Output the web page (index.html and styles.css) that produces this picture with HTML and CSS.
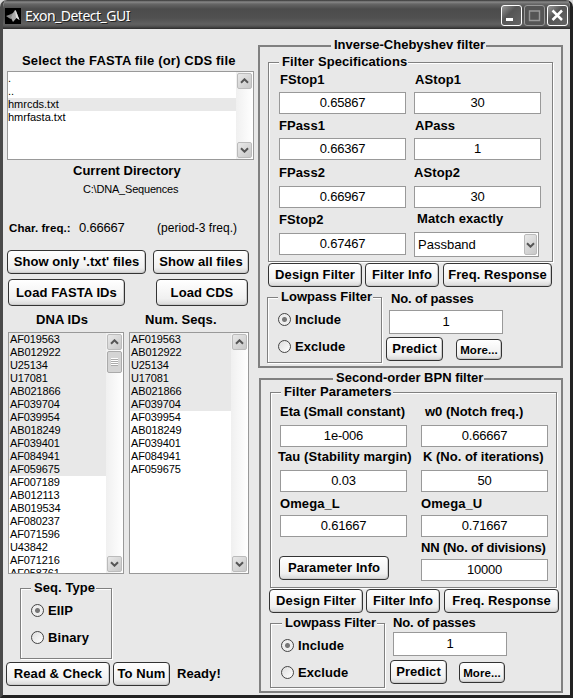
FILE: index.html
```html
<!DOCTYPE html>
<html lang="en">
<head>
<meta charset="utf-8">
<title>Exon_Detect_GUI</title>
<link rel="stylesheet" href="styles.css">
</head>
<body>
<svg width="0" height="0" class="defs">
  <symbol id="up" viewBox="0 0 9 6"><path d="M1 4.8 4.5 1.3 8 4.8" fill="none" stroke="#555" stroke-width="2"/></symbol>
  <symbol id="down" viewBox="0 0 9 6"><path d="M1 1.2 4.5 4.7 8 1.2" fill="none" stroke="#555" stroke-width="2"/></symbol>
</svg>
<div class="window">
  <header class="titlebar">
    <svg class="logo" viewBox="0 0 16 16"><rect width="16" height="16" fill="#000"/><path d="M1 8 5 6.500 8 5 8 9 5.500 11z" fill="#888"/><path d="M6 10 8 5 10 2 11 3 14.500 12 11.500 10 8 14z" fill="#aaa"/><path d="M10 2 11 3 14.500 12 11 9.500z" fill="#ddd"/></svg>
    <span class="caption">Exon_Detect_GUI</span>
    <span class="winbtn"><svg viewBox="0 0 21 21"><rect x="5" y="13" width="7" height="3" fill="#fff"/></svg></span>
    <span class="winbtn dim"><svg viewBox="0 0 21 21"><path d="M5.500 6H15.500V15.500H5.500z M5 6H16" fill="none" stroke="#999" stroke-width="1.400"/></svg></span>
    <span class="winbtn"><svg viewBox="0 0 21 21"><path d="M5.500 5.500 15 15M15 5.500 5.500 15" stroke="#fff" stroke-width="2.500"/></svg></span>
  </header>
  <main class="content">
    <section class="left">
      <h2 class="file-title">Select the FASTA file (or) CDS file</h2>
      <div class="listbox files">
        <ul><li>.</li><li>..</li><li class="sel">hmrcds.txt</li><li>hmrfasta.txt</li></ul>
        <div class="scroll"><b class="arrow"><svg><use href="#up"/></svg></b><b class="arrow end"><svg><use href="#down"/></svg></b></div>
      </div>
      <h2 class="dir-title">Current Directory</h2>
      <p class="dir">C:\DNA_Sequences</p>
      <div class="freq"><b>Char. freq.:</b><span class="num">0.66667</span><span class="note">(period-3 freq.)</span></div>
      <div class="btns show"><button>Show only '.txt' files</button><button>Show all files</button></div>
      <div class="btns load"><button>Load FASTA IDs</button><button>Load CDS</button></div>
      <div class="list-heads"><h2>DNA IDs</h2><h2>Num. Seqs.</h2></div>
      <div class="lists">
        <div class="listbox">
          <ul><li class="sel">AF019563</li><li class="sel">AB012922</li><li class="sel">U25134</li><li class="sel">U17081</li><li class="sel">AB021866</li><li class="sel">AF039704</li><li class="sel">AF039954</li><li class="sel">AB018249</li><li class="sel">AF039401</li><li class="sel">AF084941</li><li class="sel">AF059675</li><li>AF007189</li><li>AB012113</li><li>AB019534</li><li>AF080237</li><li>AF071596</li><li>U43842</li><li>AF071216</li><li>AF058761</li></ul>
          <div class="scroll"><b class="arrow"><svg><use href="#up"/></svg></b><b class="thumb"></b><b class="arrow end"><svg><use href="#down"/></svg></b></div>
        </div>
        <div class="listbox">
          <ul><li class="sel">AF019563</li><li class="sel">AB012922</li><li class="sel">U25134</li><li class="sel">U17081</li><li class="sel">AB021866</li><li class="sel">AF039704</li><li>AF039954</li><li>AB018249</li><li>AF039401</li><li>AF084941</li><li>AF059675</li></ul>
          <div class="scroll"><b class="arrow"><svg><use href="#up"/></svg></b><b class="arrow end"><svg><use href="#down"/></svg></b></div>
        </div>
      </div>
      <div class="group seq-type">
        <h3>Seq. Type</h3>
        <label class="radio on"><i></i>EIIP</label>
        <label class="radio"><i></i>Binary</label>
      </div>
      <div class="btns bottom"><button>Read &amp; Check</button><button>To Num</button><span>Ready!</span></div>
    </section>

    <section class="right">
      <div class="panel cheb">
        <h2 class="panel-title">Inverse-Chebyshev filter</h2>
        <div class="group specs">
          <h3>Filter Specifications</h3>
          <div class="fields">
            <label class="first">FStop1</label><label class="first">AStop1</label>
            <div class="input">0.65867</div><div class="input">30</div>
            <label>FPass1</label><label class="in">APass</label>
            <div class="input">0.66367</div><div class="input">1</div>
            <label class="mid">FPass2</label><label class="mid">AStop2</label>
            <div class="input">0.66967</div><div class="input">30</div>
            <label>FStop2</label><label class="match">Match exactly</label>
            <div class="input last">0.67467</div><div class="select">Passband<b class="arrow"><svg><use href="#down"/></svg></b></div>
          </div>
        </div>
        <div class="btns actions"><button>Design Filter</button><button>Filter Info</button><button>Freq. Response</button></div>
        <div class="lower">
          <div class="group lowpass"><h3>Lowpass Filter</h3><label class="radio on"><i></i>Include</label><label class="radio"><i></i>Exclude</label></div>
          <div class="passes"><h3>No. of passes</h3><div class="input">1</div><div class="btns"><button>Predict</button><button class="more">More...</button></div></div>
        </div>
      </div>
      <div class="panel bpn">
        <h2 class="panel-title">Second-order BPN filter</h2>
        <div class="group params">
          <h3>Filter Parameters</h3>
          <div class="fields">
            <label class="eta">Eta (Small constant)</label><label class="w0">w0 (Notch freq.)</label>
            <div class="input">1e-006</div><div class="input">0.66667</div>
            <label class="tau">Tau (Stability margin)</label><label class="k">K (No. of iterations)</label>
            <div class="input">0.03</div><div class="input">50</div>
            <label>Omega_L</label><label class="omega-u">Omega_U</label>
            <div class="input">0.61667</div><div class="input">0.71667</div>
            <button class="info">Parameter Info</button><label class="nn">NN (No. of divisions)</label>
            <div class="input">10000</div>
          </div>
        </div>
        <div class="btns actions"><button>Design Filter</button><button>Filter Info</button><button>Freq. Response</button></div>
        <div class="lower">
          <div class="group lowpass"><h3>Lowpass Filter</h3><label class="radio on"><i></i>Include</label><label class="radio"><i></i>Exclude</label></div>
          <div class="passes"><h3>No. of passes</h3><div class="input">1</div><div class="btns"><button>Predict</button><button class="more">More...</button></div></div>
        </div>
      </div>
    </section>
  </main>
</div>
</body>
</html>
```
FILE: styles.css
```css
* { box-sizing: border-box; margin: 0; padding: 0; }
body { width: 573px; height: 698px; overflow: hidden; background: #d8d8d8; font: bold 13px/16px "Liberation Sans", Arial, sans-serif; letter-spacing: .08px; color: #000; white-space: nowrap; }
.defs { position: absolute; }
h2, h3 { font-size: 13px; line-height: 16px; }
ul { list-style: none; }
.window { width: 573px; height: 698px; border: solid #222; border-width: 0 3px 3px; border-left-color: #4a4a4a; border-radius: 7px 7px 0 0; overflow: hidden; background: #e8e8e8; }

.titlebar { display: flex; align-items: center; height: 29px; margin: 0 -3px; padding: 2px 5px 0; background: linear-gradient(#333 0, #888 2px, #666 4px, #4c4c4c 9px, #505050 18px, #606060 24px, #555 26px, #2c2c2c 29px); }
.logo { width: 16px; height: 16px; }
.caption { flex: 1; margin-left: 4px; color: #fff; font: 14px/18px "Noto Sans", sans-serif; letter-spacing: -.5px; text-shadow: 1px 1px #222; }
.winbtn { width: 21px; height: 21px; margin-left: 2px; border: 1px solid #fff; border-radius: 3px; background: linear-gradient(135deg, #999, #555 40%, #666); }
.winbtn svg { display: block; width: 21px; height: 21px; margin: -1px; }
.winbtn.dim { border-color: #999; background: #555; }

.content { display: flex; }
.left { width: 255px; }
.file-title { margin: 24px 0 0 19px; letter-spacing: .18px; }
.listbox { display: flex; border: 1px solid #999; background: #fff; overflow: hidden; font: 11px/13px "Liberation Sans", Arial, sans-serif; letter-spacing: 0; }
.listbox ul { flex: 1; }
.listbox li { height: 13px; padding-left: 1px; letter-spacing: -.12px; }
.files li { padding-left: 0; letter-spacing: 0; }
.sel { background: #e8e8e8; }
.files { width: 247px; height: 89px; margin: 2px 0 0 4px; }
.scroll { display: flex; flex-direction: column; width: 17px; padding: 1px; background: linear-gradient(90deg, #f0f0f0, #fff); }
.arrow { display: grid; place-items: center; width: 15px; height: 16px; border: 1px solid #bbb; border-radius: 2px; background: linear-gradient(135deg, #e8e8e8, #c8c8c8); }
.arrow svg { width: 9px; height: 6px; }
.arrow.end { margin-top: auto; }
.thumb { width: 15px; height: 22px; margin-top: 1px; border: 1px solid #aaa; border-radius: 2px; background: repeating-linear-gradient(#fff 0 1px, #aaa 1px 2px) center / 7px 8px no-repeat, #d4d4d4; }
.dir-title { margin: 3px 0 0 70px; letter-spacing: 0; }
.dir { margin: 3px 0 0 80px; font: 11px/14px "Liberation Sans", Arial, sans-serif; letter-spacing: -.2px; }
.freq { display: grid; grid-template-columns: 70px 78px 1fr; align-items: baseline; height: 16px; margin: 24px 0 0 6px; font-size: 11.500px; }
.freq .num { font: 13px/16px "Liberation Sans", sans-serif; letter-spacing: -.2px; }
.freq .note { font: 12px/16px "Liberation Sans", sans-serif; letter-spacing: .05px; }
.btns { display: flex; }
button { height: 24px; border: 1px solid #333; border-radius: 4px; background: linear-gradient(#fff, #f0f0f0 75%, #d8d8d8); color: #000; font: inherit; letter-spacing: inherit; white-space: nowrap; text-align: center; box-shadow: inset -1px -1px #ccc; }
.show { gap: 7px; margin: 14px 0 0 4px; }
.show button { width: 139px; }
.show button + button { width: 96px; }
.load { justify-content: space-between; margin: 5px 10px 0 5px; }
.load button { width: 117px; height: 27px; }
.load button + button { width: 92px; }
.list-heads { display: grid; grid-template-columns: 109px 1fr; margin: 6px 0 0 33px; }
.lists { display: grid; grid-template-columns: 116px 120px; gap: 5px; height: 242px; margin: 4px 0 0 5px; }
.lists .listbox { min-height: 0; height: 242px; }
.group { border: 1px solid #808080; box-shadow: 1px 1px #fff, inset 1px 1px #fff; }
.group > h3 { width: fit-content; padding: 0 1px 0 3px; background: #e8e8e8; margin: -9px 0 0 10px; }
.seq-type { width: 92px; height: 71px; margin: 14px 0 0 17px; }
.radio { display: flex; align-items: center; height: 27px; }
h3 + .radio { margin-top: 1px; }
.radio i { width: 13px; height: 13px; margin: 0 4px 0 10px; border: 1px solid #444; border-radius: 50%; background: linear-gradient(135deg, #ddd, #fff); }
.radio.on i { background: radial-gradient(circle, #777 0 2px, #eee 3px); }
.bottom { gap: 3px; margin: 3px 0 0 3px; }
.bottom button { width: 104px; }
.bottom button + button { width: 57px; }
.bottom span { margin: 4px 0 0 4px; }

.right { width: 312px; }
.panel { border: 2px solid #808080; }
.panel-title { width: fit-content; background: #e8e8e8; padding: 0 1px 0 3px; letter-spacing: 0; }
.cheb { width: 305px; height: 323px; margin-top: 16px; }
.cheb .panel-title { margin: -10px 0 0 71px; }
.group.specs { width: 285px; height: 200px; margin: 9px 0 0 8px; }
.input, .select { height: 22px; border: 1px solid #999; background: #fff; font: 13px/20px "Liberation Sans", Arial, sans-serif; letter-spacing: -.2px; text-align: center; }
.fields { display: grid; }
.fields label { align-self: start; height: 16px; padding-top: 4px; }
.specs .fields { grid-template-columns: 127px 127px; column-gap: 8px; grid-template-rows: 21px 22px 24px 22px 26px 22px 24px 24px; margin: 1px 0 0 10px; }
.specs .first { padding: 1px 0 0 1px; }
.specs .mid { padding-top: 5px; }
.specs .in { padding-left: 1px; }
.specs .match { padding: 3px 0 0 3px; }
.specs .last { margin-top: 1px; }
.specs .input.last { height: 22px; }
.select { display: flex; justify-content: space-between; width: 125px; height: 25px; padding: 1px 1px 1px 3px; letter-spacing: 0; line-height: 21px; }
.select .arrow { width: 13px; height: 21px; }
.actions { gap: 3px; margin: 1px 0 0 8px; }
.actions button { width: 94px; }
.actions button:nth-child(2) { width: 74px; }
.actions button:nth-child(3) { width: 109px; margin-left: 1px; }
.lower { display: flex; }
.lowpass { width: 115px; height: 66px; margin: 10px 0 0 7px; }
.lowpass > h3 { margin-left: 10px; letter-spacing: 0; }
.passes { margin: 4px 0 0 4px; }
.passes h3 { margin-left: 5px; letter-spacing: -.15px; }
.passes > .input { width: 114px; height: 24px; margin: 3px 0 3px 3px; line-height: 22px; }
.passes button { width: 57px; }
.passes .more { width: 46px; height: 21px; margin: 2px 0 0 13px; font-size: 11.500px; }
.bpn { width: 304px; height: 315px; margin: 10px 0 0 1px; }
.bpn .panel-title { margin: -10px 0 0 72px; }
.params { width: 287px; height: 196px; margin: 6px 0 0 9px; }
.params .fields { grid-template-columns: 127px 127px; column-gap: 14px; grid-template-rows: 24px 22px 23px 22px 23px 22px 22px 22px; margin: 1px 0 0 9px; }
.params .eta { padding-top: 3px; letter-spacing: 0; }
.params .w0 { padding: 3px 0 0 4px; letter-spacing: 0; }
.params .tau { margin-left: -2px; padding-top: 2px; }
.params .k { padding: 2px 0 0 2px; letter-spacing: 0; }
.params .omega-u { padding-top: 4px; }
.params .nn { padding-top: 3px; letter-spacing: -.15px; }
.params .info { grid-row: 7 / 9; grid-column: 1; align-self: start; width: 110px; margin: 19px 0 0 -1px; }
.bpn .actions button:nth-child(3) { width: 115px; }
.bpn .lowpass { height: 65px; margin-left: 9px; }
.bpn .lowpass > h3 { margin-left: 11px; }
.bpn .passes { margin: 2px 0 0 5px; }
.bpn .passes h3 { margin-left: 3px; }
.bpn .passes > .input { margin-top: 1px; margin-bottom: 4px; }
.bpn .passes .more { margin-left: 12px; }
```
